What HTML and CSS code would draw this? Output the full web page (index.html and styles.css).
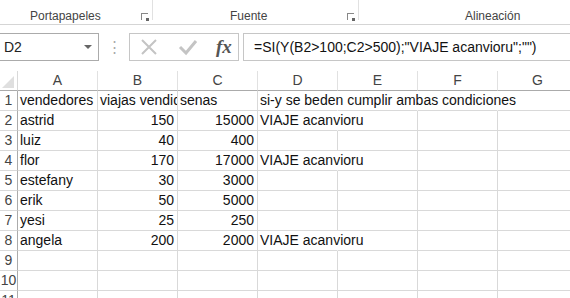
FILE: index.html
```html
<html>
<head>
<title>Libro1 - Excel</title>
<link rel="stylesheet" href="styles.css">
</head>
<body>

  <div class="ribbon">
    <div class="group g-clip">
      <span class="label">Portapapeles</span>
      <span class="launch"></span>
    </div>
    <div class="group g-font">
      <span class="label">Fuente</span>
      <span class="launch"></span>
    </div>
    <div class="group g-align">
      <span class="label">Alineación</span>
    </div>
  </div>

  <div class="fbar">
    <div class="namebox">
      <span>D2</span>
      <span class="arrow"></span>
    </div>
    <div class="dots">⋮</div>
    <div class="buttons">
      <svg width="18" height="18" viewBox="0 0 18 18"><path d="M2 2 L16 16 M16 2 L2 16" stroke="#c4c4c4" stroke-width="2" fill="none"/></svg>
      <svg width="20" height="18" viewBox="0 0 20 18"><path d="M2 9 L8 15 L18 3" stroke="#c4c4c4" stroke-width="3" fill="none"/></svg>
      <span class="fx">fx</span>
    </div>
    <div class="formula">=SI(Y(B2&gt;100;C2&gt;500);"VIAJE acanvioru";"")</div>
  </div>

  <div class="sheet">
    <div class="corner"><span class="tri"></span></div>
    <div class="colhead">A</div>
    <div class="colhead">B</div>
    <div class="colhead">C</div>
    <div class="colhead">D</div>
    <div class="colhead">E</div>
    <div class="colhead">F</div>
    <div class="colhead">G</div>

    <div class="rowhead">1</div>
    <div class="cell">vendedores</div>
    <div class="cell clip">viajas vendidos</div>
    <div class="cell">senas</div>
    <div class="cell over">si-y se beden cumplir ambas condiciones</div>
    <div class="cell nb"></div>
    <div class="cell nb"></div>
    <div class="cell"></div>

    <div class="rowhead">2</div>
    <div class="cell">astrid</div>
    <div class="cell num">150</div>
    <div class="cell num">15000</div>
    <div class="cell over">VIAJE acanvioru</div>
    <div class="cell"></div>
    <div class="cell"></div>
    <div class="cell"></div>

    <div class="rowhead">3</div>
    <div class="cell">luiz</div>
    <div class="cell num">40</div>
    <div class="cell num">400</div>
    <div class="cell"></div>
    <div class="cell"></div>
    <div class="cell"></div>
    <div class="cell"></div>

    <div class="rowhead">4</div>
    <div class="cell">flor</div>
    <div class="cell num">170</div>
    <div class="cell num">17000</div>
    <div class="cell over">VIAJE acanvioru</div>
    <div class="cell"></div>
    <div class="cell"></div>
    <div class="cell"></div>

    <div class="rowhead">5</div>
    <div class="cell">estefany</div>
    <div class="cell num">30</div>
    <div class="cell num">3000</div>
    <div class="cell"></div>
    <div class="cell"></div>
    <div class="cell"></div>
    <div class="cell"></div>

    <div class="rowhead">6</div>
    <div class="cell">erik</div>
    <div class="cell num">50</div>
    <div class="cell num">5000</div>
    <div class="cell"></div>
    <div class="cell"></div>
    <div class="cell"></div>
    <div class="cell"></div>

    <div class="rowhead">7</div>
    <div class="cell">yesi</div>
    <div class="cell num">25</div>
    <div class="cell num">250</div>
    <div class="cell"></div>
    <div class="cell"></div>
    <div class="cell"></div>
    <div class="cell"></div>

    <div class="rowhead">8</div>
    <div class="cell">angela</div>
    <div class="cell num">200</div>
    <div class="cell num">2000</div>
    <div class="cell over">VIAJE acanvioru</div>
    <div class="cell"></div>
    <div class="cell"></div>
    <div class="cell"></div>

    <div class="rowhead">9</div>
    <div class="cell"></div>
    <div class="cell"></div>
    <div class="cell"></div>
    <div class="cell"></div>
    <div class="cell"></div>
    <div class="cell"></div>
    <div class="cell"></div>

    <div class="rowhead">10</div>
    <div class="cell"></div>
    <div class="cell"></div>
    <div class="cell"></div>
    <div class="cell"></div>
    <div class="cell"></div>
    <div class="cell"></div>
    <div class="cell"></div>

    <div class="rowhead">11</div>
    <div class="cell"></div>
    <div class="cell"></div>
    <div class="cell"></div>
    <div class="cell"></div>
    <div class="cell"></div>
    <div class="cell"></div>
    <div class="cell"></div>
  </div>

</body>
</html>
```

FILE: styles.css
```css
body {
  margin: 0;
  background: #fff;
  font-family: "Liberation Sans", Arial, sans-serif;
  overflow: hidden;
  width: 570px;
  height: 298px;
}

/* ribbon strip */
.ribbon {
  display: flex;
  height: 24px;
  border-bottom: 1px solid #d5d5d5;
}
.group {
  position: relative;
  height: 20px;
  border-right: 1px solid #e1e1e1;
  font-size: 12px;
  color: #444;
}
.g-clip { width: 152px; }
.g-font { width: 205px; }
.g-align { width: 211px; border-right: none; }
.label {
  position: absolute;
  top: 9px;
  white-space: nowrap;
}
.g-clip .label { left: 30px; }
.g-font .label { left: 77px; }
.g-align .label { left: 106px; }
.launch {
  position: absolute;
  right: 4px;
  top: 13px;
  width: 6px;
  height: 6px;
  border-left: 1px solid #888;
  border-top: 1px solid #888;
}
.launch::after {
  content: "";
  position: absolute;
  right: -1px;
  bottom: -1px;
  width: 3px;
  height: 3px;
  background: #666;
}

/* formula bar */
.fbar {
  display: flex;
  align-items: center;
  margin-top: 8px;
  height: 28px;
}
.namebox {
  box-sizing: border-box;
  width: 99px;
  height: 28px;
  border: 1px solid #ababab;
  border-left: none;
  display: flex;
  align-items: center;
  justify-content: space-between;
  padding: 0 6px 0 4px;
  font-size: 14px;
  color: #222;
}
.arrow {
  width: 0;
  height: 0;
  border-left: 4px solid transparent;
  border-right: 4px solid transparent;
  border-top: 4px solid #666;
}
.dots {
  width: 30px;
  text-align: center;
  color: #aaa;
  font-size: 15px;
}
.buttons {
  box-sizing: border-box;
  width: 110px;
  height: 28px;
  border: 1px solid #c6c6c6;
  display: flex;
  align-items: center;
  gap: 20px;
  padding-left: 10px;
}
.fx {
  font-family: "Liberation Serif", serif;
  font-style: italic;
  font-weight: bold;
  font-size: 19px;
  color: #555;
  margin-left: -2px;
}
.formula {
  box-sizing: border-box;
  margin-left: 4px;
  flex: 1;
  height: 28px;
  border: 1px solid #c6c6c6;
  border-right: none;
  padding: 5px 0 0 10px;
  font-size: 14px;
  color: #111;
  white-space: nowrap;
}

/* sheet grid */
.sheet {
  margin-top: 10px;
  display: grid;
  grid-template-columns: 18px repeat(7, 80px);
  grid-auto-rows: 20px;
  font-size: 14px;
  color: #111;
}
.sheet > div {
  box-sizing: border-box;
  border-right: 1px solid #d9d9d9;
  border-bottom: 1px solid #d9d9d9;
  white-space: nowrap;
  line-height: 19px;
}
.corner {
  position: relative;
  border-bottom-color: #ababab !important;
}
.tri {
  position: absolute;
  right: 3px;
  bottom: 2px;
  width: 0;
  height: 0;
  border-left: 12px solid transparent;
  border-bottom: 12px solid #dfdfdf;
}
.colhead {
  text-align: center;
  color: #444;
  border-right-color: #e1e1e1 !important;
  border-bottom-color: #ababab !important;
}
.rowhead {
  text-align: center;
  color: #444;
  border-right-color: #ababab !important;
  overflow: hidden;
}
.cell {
  padding: 0 3px 0 2px;
  position: relative;
}
.clip { overflow: hidden; }
/* text spilling into the next cells hides their dividers */
.sheet > .over { overflow: visible; z-index: 1; border-right-color: transparent; }
.sheet > .nb { border-right-color: transparent; }
.num { text-align: right; }
```
